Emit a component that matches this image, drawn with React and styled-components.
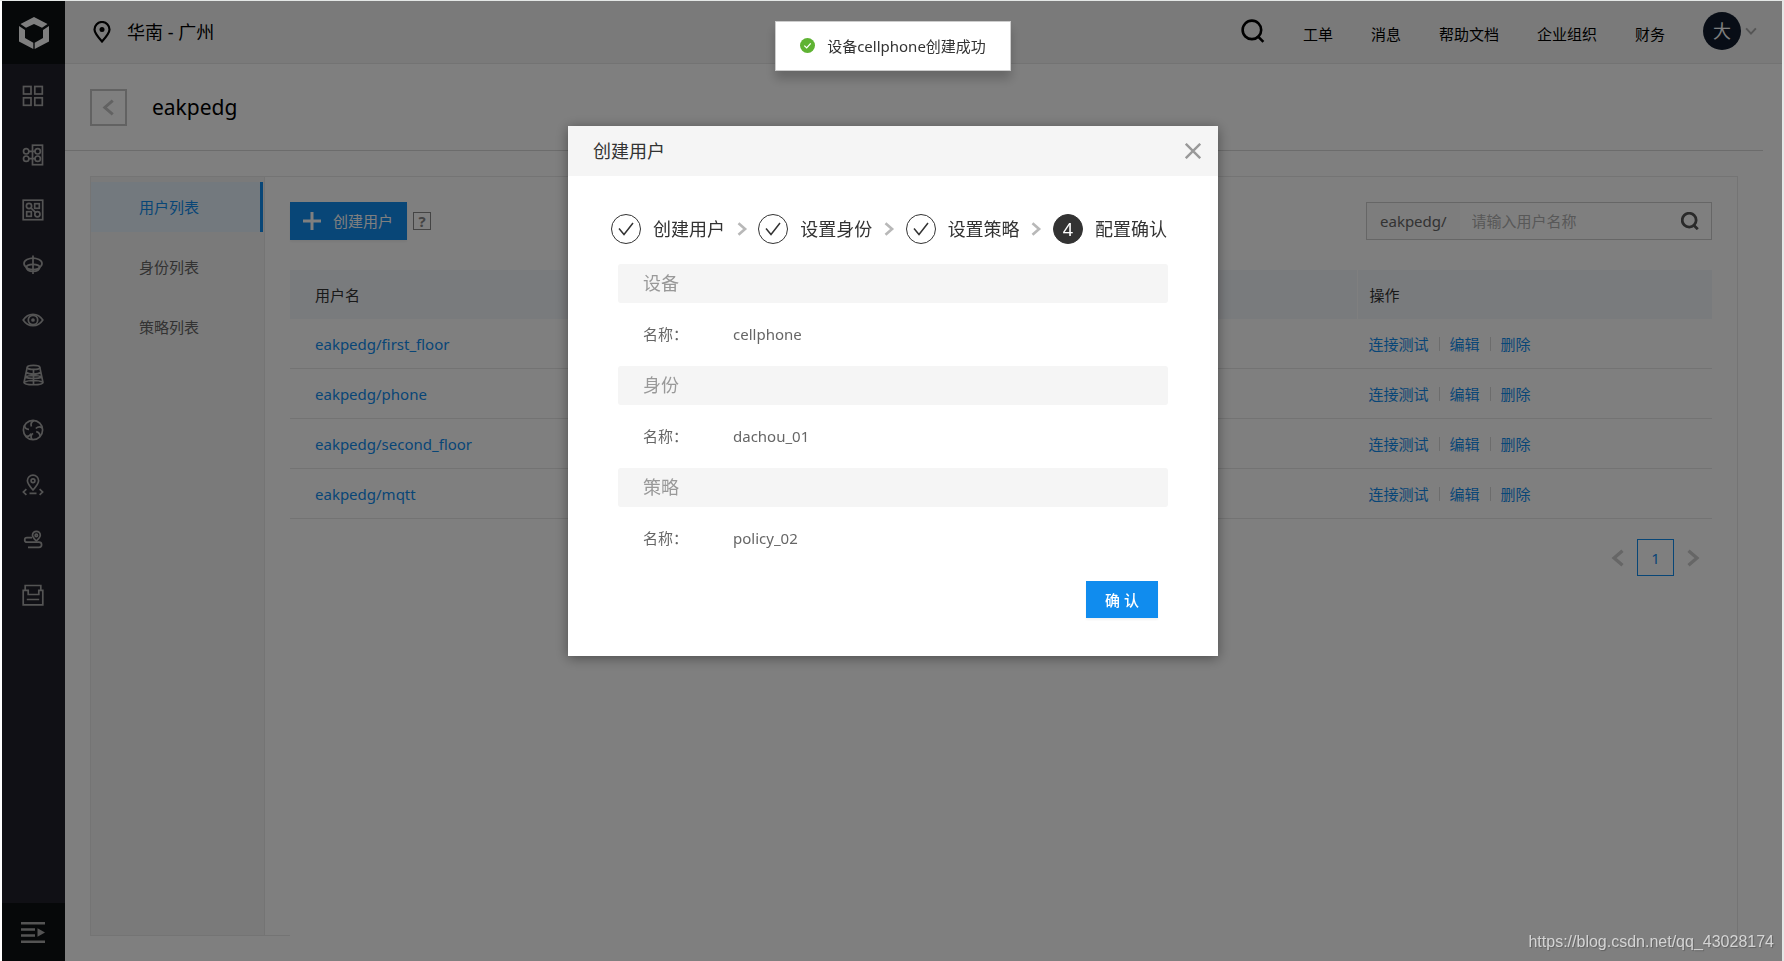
import React from 'react'
import styled, { createGlobalStyle, css } from 'styled-components'

const users = ['eakpedg/first_floor', 'eakpedg/phone', 'eakpedg/second_floor', 'eakpedg/mqtt']

const tabs = ['用户列表', '身份列表', '策略列表']

const topLinks = ['工单', '消息', '帮助文档', '企业组织', '财务']

const steps = [
  { title: '创建用户', done: true },
  { title: '设置身份', done: true },
  { title: '设置策略', done: true },
  { title: '配置确认', done: false }
]

const summary = [
  { title: '设备', value: 'cellphone' },
  { title: '身份', value: 'dachou_01' },
  { title: '策略', value: 'policy_02' }
]

// side menu drawings, all on a 22 x 22 grid
const menu = [
  {
    name: '总览',
    icon: (
      <>
        <rect x="1.5" y="1.5" width="7.5" height="7.5" />
        <rect x="12.8" y="1.5" width="7.5" height="7.5" />
        <rect x="1.5" y="12.8" width="7.5" height="7.5" />
        <rect x="12.8" y="12.8" width="7.5" height="7.5" />
      </>
    )
  },
  {
    name: '物接入',
    icon: (
      <>
        <rect x="10.5" y="1.2" width="10" height="19.5" />
        <circle cx="4.2" cy="7.3" r="2.7" />
        <circle cx="4.2" cy="14.7" r="2.7" />
        <circle cx="15.7" cy="7.3" r="2.7" />
        <circle cx="15.7" cy="14.7" r="2.7" />
        <path d="M7 7.3h6M7 14.7h6" />
      </>
    )
  },
  {
    name: '物解析',
    icon: (
      <>
        <rect x="1.2" y="1.2" width="19.5" height="19.5" />
        <circle cx="7" cy="7" r="2.6" />
        <rect x="12.7" y="4.7" width="4.6" height="4.6" />
        <rect x="4.7" y="12.7" width="4.6" height="4.6" />
        <circle cx="15.4" cy="15.2" r="2.6" />
        <path d="M8.9 8.9l4.6 4.5" />
      </>
    )
  },
  {
    name: '时序数据库',
    icon: (
      <>
        <path d="M5 13.500C1 11.500 1 7.500 5 5.500c3.500-1.700 8.500-1.700 12 0 4 2 4 6 0 8" />
        <ellipse cx="11" cy="13" rx="6.500" ry="2.700" />
        <path d="M4 12.500c1 6.500 13 6.500 14 0M11 1.500v18.500" />
      </>
    )
  },
  {
    name: '物可视',
    icon: (
      <>
        <path d="M1.200 11C6 3.500 16 3.500 20.800 11 16 18.500 6 18.500 1.200 11z" />
        <circle cx="11" cy="11" r="4.700" />
        <circle cx="11" cy="11" r="1" fill="currentColor" />
      </>
    )
  },
  {
    name: '数据工厂',
    icon: (
      <>
        <ellipse cx="11.500" cy="3.400" rx="6.300" ry="2" />
        <path d="M5.200 3.400L2 18.500c0 3 19 3 19 0L17.800 3.400M11.500 5.400v15.400M4.200 8.500c3 2.200 11.600 2.200 14.600 0M3.200 13c3.500-2 13-2 16.600 0M3.200 13c3.500 2 13 2 16.600 0M2.500 18c4-2 14-2 18 0" />
      </>
    )
  },
  {
    name: '规则引擎',
    icon: (
      <>
        <circle cx="11" cy="11" r="9.600" />
        <path d="M12 1.600c-2.500 1-3.600 3-2.600 6M20.300 9c-2-1.700-4.300-1.600-6.500.5M18 17.600c.1-2.600-1-4.400-3.800-5M10 20.400c-1.500-2.200-1.200-4.300 1-6M3.700 17.200c2.500.6 4.300-.3 5.300-2.700M2.500 6.500c.3 2.500 1.800 3.900 4.500 3.800" />
      </>
    )
  },
  {
    name: '设备地图',
    icon: (
      <>
        <path d="M11 16C7.500 12 5.400 9.300 5.400 6.700a5.600 5.600 0 0 1 11.200 0C16.600 9.300 14.500 12 11 16z" />
        <circle cx="11" cy="6.700" r="1.900" />
        <path d="M4.400 15.200L1.400 18l3 2.800M17.600 15.200l3 2.800-3 2.800M7.500 19.300h7" />
      </>
    )
  },
  {
    name: '轨迹分析',
    icon: (
      <>
        <path d="M14.300 12C11.800 9.500 10.500 8 10.500 6.200a3.900 3.900 0 0 1 7.800 0C18.300 8 17 9.500 14.300 12z" />
        <circle cx="14.300" cy="6.400" r="1.200" />
        <path d="M10 8.600H5a2.300 2.300 0 0 0 0 4.600h12a2.600 2.600 0 0 1 0 5.200H6" />
      </>
    )
  },
  {
    name: '存档',
    icon: (
      <>
        <path d="M3.200 6.500v-5h15.600v5M3.200 6.300h-2v14.500h19.600V6.300h-4v4.200H6.200V6.300h-3M4.800 15.500h12.400" />
      </>
    )
  }
]

const SearchIcon = ({ size, weight }) => (
  <svg width={size} height={size} viewBox="0 0 22 22" fill="none" stroke="currentColor" strokeWidth={weight}>
    <circle cx="10" cy="10" r="8.500" />
    <path d="M15 15.500l5.500 5.500" />
  </svg>
)

const Chevron = ({ dir, size = 16, weight = 2 }) => {
  const shapes = {
    left: 'M12 1.500L4.500 8l7.500 6.500',
    right: 'M4 1.500L11.500 8 4 14.500',
    down: 'M1.500 4.500L8 11.500l6.500-7'
  }
  return (
    <svg width={size} height={size} viewBox="0 0 16 16" fill="none" stroke="currentColor" strokeWidth={weight}>
      <path d={shapes[dir]} />
    </svg>
  )
}

function Sidebar() {
  return (
    <Side>
      <Logo href="#" aria-label="首页">
        <svg width="30" height="32" viewBox="0 0 30 32" fill="#fff">
          <path d="M15 0l13.500 7-5.500 3.700L15 7 7 10.700 1.500 7z" />
          <path d="M0 9l6 4v8l8.300 4.800V32L0 24.500z" />
          <path d="M30 9l-6 4v8l-8.300 4.800V32L30 24.500z" />
        </svg>
      </Logo>
      <Menu>
        {menu.map(m => (
          <MenuItem key={m.name} href="#" aria-label={m.name}>
            <svg width="22" height="22" viewBox="0 0 22 22" fill="none" stroke="currentColor" strokeWidth="1.700">
              {m.icon}
            </svg>
          </MenuItem>
        ))}
      </Menu>
      <Expand aria-label="展开菜单">
        <svg width="24" height="22" viewBox="0 0 24 22" fill="currentColor">
          <path d="M0 0h24v2.500H0zM0 6.200h14v2.500H0zM0 12.200h14v2.500H0zM0 18.400h24v2.500H0zM16.500 6.200l7.500 4.300-7.500 4.300z" />
        </svg>
      </Expand>
    </Side>
  )
}

function TopBar() {
  return (
    <Header>
      <Region>
        <svg width="18" height="22" viewBox="0 0 18 22" fill="none" stroke="currentColor" strokeWidth="2.200">
          <path d="M9 20.500C4.500 15.500 1.500 12 1.500 8.500a7.500 7.500 0 0 1 15 0c0 3.500-3 7-7.500 12z" />
          <circle cx="9" cy="8.500" r="2.500" fill="currentColor" stroke="none" />
        </svg>
        <span>华南 - 广州</span>
      </Region>
      <TopNav>
        <IconButton aria-label="搜索">
          <SearchIcon size={24} weight={2.4} />
        </IconButton>
        {topLinks.map(l => (
          <TopLink key={l} href="#">{l}</TopLink>
        ))}
        <Account>
          <Avatar>大</Avatar>
          <Chevron dir="down" size={12} weight={2.6} />
        </Account>
      </TopNav>
    </Header>
  )
}

function UserTable() {
  return (
    <Table>
      <thead>
        <tr>
          <Th $wide>用户名</Th>
          <Th>操作</Th>
        </tr>
      </thead>
      <tbody>
        {users.map(u => (
          <tr key={u}>
            <Td $wide><Link href="#">{u}</Link></Td>
            <Td>
              <Actions>
                <Link href="#">连接测试</Link>
                <Link href="#">编辑</Link>
                <Link href="#">删除</Link>
              </Actions>
            </Td>
          </tr>
        ))}
      </tbody>
    </Table>
  )
}

function CreateDialog() {
  return (
    <Dialog role="dialog" aria-label="创建用户">
      <DialogHead>
        创建用户
        <IconButton $muted aria-label="关闭">
          <svg width="16" height="16" viewBox="0 0 16 16" stroke="currentColor" strokeWidth="2.400">
            <path d="M.8.8l14.400 14.400M15.200.8L.8 15.200" />
          </svg>
        </IconButton>
      </DialogHead>
      <Steps>
        {steps.map((s, i) => (
          <React.Fragment key={s.title}>
            {i > 0 && <Chevron dir="right" size={14} weight={3} />}
            <Step>
              <Circle $done={s.done}>
                {s.done ? (
                  <svg width="16" height="14" viewBox="0 0 16 14" fill="none" stroke="currentColor" strokeWidth="1.500">
                    <path d="M1 6.500l5 6L15 1" />
                  </svg>
                ) : i + 1}
              </Circle>
              {s.title}
            </Step>
          </React.Fragment>
        ))}
      </Steps>
      <Summary>
        {summary.map(s => (
          <section key={s.title}>
            <SectionTitle>{s.title}</SectionTitle>
            <Field>
              <FieldName>名称：</FieldName>
              <span>{s.value}</span>
            </Field>
          </section>
        ))}
      </Summary>
      <DialogFoot>
        <Confirm>确 认</Confirm>
      </DialogFoot>
    </Dialog>
  )
}

function App() {
  return (
    <>
      <GlobalStyle />
      <Page>
        <Sidebar />
        <Content>
          <TopBar />
          <TitleBar>
            <Back aria-label="返回">
              <Chevron dir="left" size={17} weight={2.8} />
            </Back>
            <Title>eakpedg</Title>
          </TitleBar>
          <Panel>
            <TabList>
              {tabs.map((t, i) => (
                <Tab key={t} href="#" $active={i === 0}>{t}</Tab>
              ))}
            </TabList>
            <Main>
              <Toolbar>
                <Create>
                  <svg width="18" height="18" viewBox="0 0 18 18" stroke="currentColor" strokeWidth="3">
                    <path d="M9 0v18M0 9h18" />
                  </svg>
                  创建用户
                </Create>
                <Help aria-label="帮助">?</Help>
                <SearchBox>
                  <Prefix htmlFor="user-search">eakpedg/</Prefix>
                  <SearchInput id="user-search" placeholder="请输入用户名称" />
                  <IconButton $dark aria-label="搜索用户">
                    <SearchIcon size={18} weight={3.4} />
                  </IconButton>
                </SearchBox>
              </Toolbar>
              <UserTable />
              <Pager>
                <Chevron dir="left" size={18} weight={3} />
                <PageNumber>1</PageNumber>
                <Chevron dir="right" size={18} weight={3} />
              </Pager>
            </Main>
          </Panel>
        </Content>
      </Page>
      <Mask>
        <CreateDialog />
        <Toast role="status">
          <svg width="15" height="15" viewBox="0 0 15 15" fill="none">
            <circle cx="7.500" cy="7.500" r="7.500" fill="#5fb333" />
            <path d="M4.300 7.600l2.400 2.300 4-4.500" stroke="#fff" strokeWidth="1.300" />
          </svg>
          设备cellphone创建成功
        </Toast>
      </Mask>
      <Watermark>https://blog.csdn.net/qq_43028174</Watermark>
    </>
  )
}

const GlobalStyle = createGlobalStyle`
  * {
    box-sizing: border-box;
  }
  body {
    margin: 0;
    background: #fff;
    color: #000;
    font-family: 'Noto Sans', 'Noto Sans CJK SC', sans-serif;
    font-size: 15px;
    line-height: 20px;
  }
  button, input {
    font: inherit;
    border: 0;
    padding: 0;
    background: none;
    cursor: pointer;
  }
  a {
    color: inherit;
    text-decoration: none;
  }
  svg {
    display: block;
    flex: none;
  }
`

const Page = styled.div`
  display: flex;
  min-height: 100vh;
  border: solid #e4e7e6;
  border-width: 1px 2px 0 0;
  padding-left: 2px;
`

const Side = styled.aside`
  display: flex;
  flex-direction: column;
  width: 63px;
  flex: none;
  background: #21202a;
  color: #a8a8a8;
`

const Logo = styled.a`
  display: flex;
  align-items: center;
  justify-content: center;
  height: 63px;
  background: #0c1012;
`

const Menu = styled.nav`
  display: flex;
  flex-direction: column;
  flex: 1;
  padding: 1px 1px 0 0;
`

const MenuItem = styled.a`
  display: flex;
  align-items: center;
  justify-content: center;
  height: 55px;

  &:first-child {
    height: 62px;
  }
`

const Expand = styled.button`
  display: flex;
  align-items: center;
  justify-content: center;
  height: 58px;
  padding: 2px 2px 0 0;
  background: #0c1012;
  color: #a8a8a8;
`

const Content = styled.div`
  display: flex;
  flex-direction: column;
  flex: 1;
`

const Header = styled.header`
  display: flex;
  align-items: center;
  justify-content: space-between;
  height: 63px;
  padding: 0 25px 2px 28px;
  background: #f5f5f5;
  border-bottom: 1px solid #e6e6e6;
`

const Region = styled.div`
  display: flex;
  align-items: center;
  gap: 16px;
  padding-top: 2px;
  font-size: 18px;
`

const TopNav = styled.nav`
  display: flex;
  align-items: center;
  gap: 38px;
`

const IconButton = styled.button`
  display: flex;
  align-items: center;
  color: ${p => (p.$muted ? '#999' : p.$dark ? '#555' : '#000')};
`

const TopLink = styled.a`
  padding-top: 6px;
`

const Account = styled.div`
  display: flex;
  align-items: center;
  gap: 4px;
  color: #aaa;
`

const Avatar = styled.span`
  display: flex;
  align-items: center;
  justify-content: center;
  width: 38px;
  height: 38px;
  border-radius: 50%;
  background: #101b2c;
  color: #fff;
  font-size: 18px;
`

const TitleBar = styled.div`
  display: flex;
  align-items: center;
  gap: 25px;
  height: 87px;
  margin-right: 19px;
  padding-left: 25px;
  border-bottom: 1px solid #d8d8d8;
`

const Back = styled.button`
  display: flex;
  align-items: center;
  justify-content: center;
  width: 37px;
  height: 37px;
  border: 2px solid #c4c4c4;
  color: #c4c4c4;
`

const Title = styled.h1`
  margin: 0;
  font-size: 21px;
  font-weight: 400;
`

const Panel = styled.div`
  display: flex;
  flex: 1;
  margin: 25px 44px 25px 25px;
  border: 1px solid #e9e9e9;
`

const TabList = styled.nav`
  display: flex;
  flex-direction: column;
  gap: 10px;
  width: 174px;
  padding: 5px 1px 0 0;
  background: #f5f5f5;
  border-right: 1px solid #e9e9e9;
`

const Tab = styled.a`
  padding: 15px 0 15px 48px;
  color: #666;

  ${p => p.$active && css`
    background: #e6f3fc;
    border-right: 3px solid #108cee;
    color: #108cee;
  `}
`

// covers the panel's bottom line
const Main = styled.main`
  flex: 1;
  margin: 0 0 -1px 25px;
  padding: 25px 25px 0 0;
  background: #fff;
`

const Toolbar = styled.div`
  display: flex;
  align-items: center;
  gap: 6px;
  margin-bottom: 30px;
`

const Create = styled.button`
  display: flex;
  align-items: center;
  gap: 12px;
  height: 38px;
  padding: 0 14px 0 13px;
  background: #108cee;
  color: #fff;
  box-shadow: 0 2px 2px #0000000d;
`

const Help = styled.button`
  width: 18px;
  height: 18px;
  border: 1px solid #888;
  color: #888;
  font-weight: 700;
  line-height: 16px;
`

const SearchBox = styled.div`
  display: flex;
  align-items: stretch;
  width: 346px;
  height: 38px;
  margin-left: auto;
  padding-right: 12px;
  border: 1px solid #ccc;
`

const Prefix = styled.label`
  padding: 8px 13px;
  background: #fafafa;
  color: #666;
`

const SearchInput = styled.input`
  flex: 1;
  min-width: 0;
  padding-left: 12px;
  cursor: text;

  &::placeholder {
    color: #b0b0b0;
  }
`

const Table = styled.table`
  width: 100%;
  border-spacing: 0;
  table-layout: fixed;
`

const cell = css`
  padding: 0 ${p => (p.$wide ? 25 : 12)}px;
  text-align: left;
  font-weight: 400;
`

const Th = styled.th`
  ${cell}
  width: ${p => (p.$wide ? '75%' : 'auto')};
  height: 49px;
  background: #f3f6fb;
  color: #333;
  border-left: ${p => (p.$wide ? '0' : '1px solid #fff')};
`

const Td = styled.td`
  ${cell}
  height: 50px;
  border-bottom: 1px solid #e6e6e6;
`

const Link = styled.a`
  color: #108cee;
`

const Actions = styled.div`
  display: flex;

  a + a {
    display: flex;
    align-items: center;
  }

  a + a::before {
    content: '';
    height: 14px;
    margin: 0 10px;
    border-left: 1px solid #d9d9d9;
  }
`

const Pager = styled.div`
  display: flex;
  align-items: center;
  justify-content: flex-end;
  gap: 10px;
  margin-top: 20px;
  padding-right: 10px;
  color: #ccc;
`

const PageNumber = styled.button`
  width: 37px;
  height: 37px;
  border: 1px solid #108cee;
  color: #108cee;
`

const Mask = styled.div`
  position: fixed;
  inset: 1px 2px 0 2px;
  display: flex;
  align-items: flex-start;
  justify-content: center;
  padding: 125px 0 0 2px;
  background: #00000080;
`

const Toast = styled.div`
  position: absolute;
  top: 20px;
  display: flex;
  align-items: center;
  gap: 12px;
  height: 50px;
  padding: 0 24px;
  background: #fff;
  border: 1px solid #ccc;
  box-shadow: 0 8px 10px #00000033;
  color: #333;

  svg {
    margin-bottom: 1px;
  }
`

const Dialog = styled.div`
  width: 650px;
  background: #fff;
  box-shadow: 0 2px 12px #00000066;
  color: #333;
`

const DialogHead = styled.div`
  display: flex;
  align-items: center;
  justify-content: space-between;
  height: 50px;
  padding: 0 17px 0 25px;
  background: #f5f5f5;
  font-size: 18px;
`

const Steps = styled.div`
  display: flex;
  align-items: center;
  justify-content: space-between;
  margin: 38px 51px 20px 43px;
  font-size: 18px;
  color: #333;

  > svg {
    color: #b8b8b8;
  }
`

const Step = styled.div`
  display: flex;
  align-items: center;
  gap: 12px;
`

const Circle = styled.span`
  display: flex;
  align-items: center;
  justify-content: center;
  width: 30px;
  height: 30px;
  border: 1px solid #333;
  border-radius: 50%;
  background: ${p => (p.$done ? '#fff' : '#333')};
  color: ${p => (p.$done ? '#333' : '#fff')};
`

const Summary = styled.div`
  padding: 0 50px;
`

const SectionTitle = styled.h2`
  margin: 0;
  padding: 0 25px;
  border-radius: 3px;
  background: #f5f5f5;
  color: #999;
  font-size: 18px;
  font-weight: 400;
  line-height: 39px;
`

const Field = styled.div`
  display: flex;
  padding: 0 25px;
  color: #666;
  line-height: 63px;
`

const FieldName = styled.span`
  width: 90px;
`

const DialogFoot = styled.div`
  display: flex;
  justify-content: flex-end;
  padding: 11px 60px 38px;
`

const Confirm = styled.button`
  width: 72px;
  height: 37px;
  background: #108cee;
  color: #fff;
  font-weight: 500;
  box-shadow: 0 2px 2px #0000000d;
`

const Watermark = styled.div`
  position: fixed;
  right: 10px;
  bottom: 9px;
  color: #d4d4d4;
  font-family: 'Liberation Sans', sans-serif;
  font-size: 16px;
  text-shadow: 1px 1px 1px #00000040;
`

export default App
